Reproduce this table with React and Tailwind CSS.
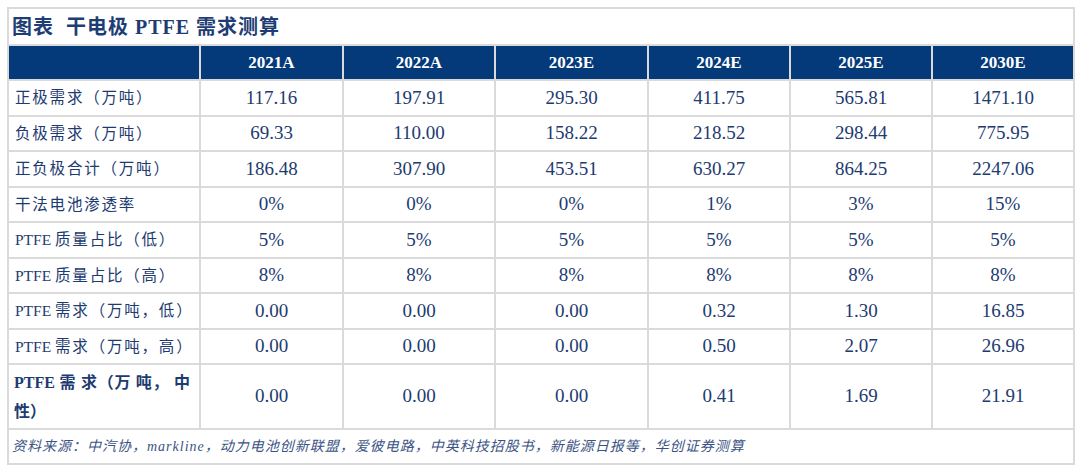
import React from 'react';

const cols = ['2021A', '2022A', '2023E', '2024E', '2025E', '2030E'];
const widths = ['w-[192px]', 'w-[143px]', 'w-[152px]', 'w-[153px]', 'w-[142px]', 'w-[142px]', 'w-[142px]'];

const rows = [
    { latin: '', label: '正极需求（万吨）', values: ['117.16', '197.91', '295.30', '411.75', '565.81', '1471.10'] },
    { latin: '', label: '负极需求（万吨）', values: ['69.33', '110.00', '158.22', '218.52', '298.44', '775.95'] },
    { latin: '', label: '正负极合计（万吨）', values: ['186.48', '307.90', '453.51', '630.27', '864.25', '2247.06'] },
    { latin: '', label: '干法电池渗透率', values: ['0%', '0%', '0%', '1%', '3%', '15%'] },
    { latin: 'PTFE', label: '质量占比（低）', values: ['5%', '5%', '5%', '5%', '5%', '5%'] },
    { latin: 'PTFE', label: '质量占比（高）', values: ['8%', '8%', '8%', '8%', '8%', '8%'] },
    { latin: 'PTFE', label: '需求（万吨，低）', values: ['0.00', '0.00', '0.00', '0.32', '1.30', '16.85'] },
    { latin: 'PTFE', label: '需求（万吨，高）', values: ['0.00', '0.00', '0.00', '0.50', '2.07', '26.96'] },
];

const serif = { fontFamily: '"Liberation Serif", "Noto Sans CJK SC", serif' };

export default function App() {
    return (
        <div className="w-[1080px] h-[471px] bg-white pt-[7px] pl-[7px]" style={serif}>
            <table className="border-collapse table-fixed w-[1068px] text-[#1d3b70]">
                <colgroup>
                    {widths.map((w, i) => <col key={i} className={w} />)}
                </colgroup>
                <tbody>
                    {/* Title */}
                    <tr className="h-[37px]">
                        <td colSpan={7} className="border-2 border-[#dadada] pl-[3px] pt-[1px] text-[20px] font-bold text-[#1e3d74] tracking-[1px]">
                            图表&nbsp;&nbsp;干电极 PTFE 需求测算
                        </td>
                    </tr>

                    {/* Header */}
                    <tr className="h-[35px] bg-[#053a7a]">
                        <td className="border-2 border-[#dadada]" />
                        {cols.map((c) => (
                            <td key={c} className="border-2 border-[#dadada] text-center text-white font-bold text-[17px]">
                                {c}
                            </td>
                        ))}
                    </tr>

                    {rows.map((r) => (
                        <tr key={r.label} className="h-[35.5px]">
                            <td className="border-2 border-[#dadada] pl-[6px] whitespace-nowrap text-[15.5px]">
                                {r.latin && <>{r.latin}&nbsp;</>}
                                <span className="tracking-[1.8px]">{r.label}</span>
                            </td>
                            {r.values.map((v, i) => (
                                <td key={i} className="border-2 border-[#dadada] text-center text-[19px]">
                                    {v}
                                </td>
                            ))}
                        </tr>
                    ))}

                    {/* Mid-case row, bold label on two lines, first one justified */}
                    <tr className="h-[65px]">
                        <td className="border-2 border-[#dadada] pl-[5px] pr-[9px] font-bold text-[16px] leading-[29px]">
                            <div className="text-justify [text-align-last:justify] whitespace-nowrap">PTFE 需 求（万 吨， 中</div>
                            <div>性）</div>
                        </td>
                        {['0.00', '0.00', '0.00', '0.41', '1.69', '21.91'].map((v, i) => (
                            <td key={i} className="border-2 border-[#dadada] text-center text-[19px]">
                                {v}
                            </td>
                        ))}
                    </tr>

                    {/* Source */}
                    <tr className="h-[35px]">
                        <td colSpan={7} className="border-2 border-[#dadada] pl-[3px] text-[14px] italic text-[#3b5384] tracking-[1px]">
                            资料来源：中汽协，markline，动力电池创新联盟，爱彼电路，中英科技招股书，新能源日报等，华创证券测算
                        </td>
                    </tr>
                </tbody>
            </table>
        </div>
    );
}
